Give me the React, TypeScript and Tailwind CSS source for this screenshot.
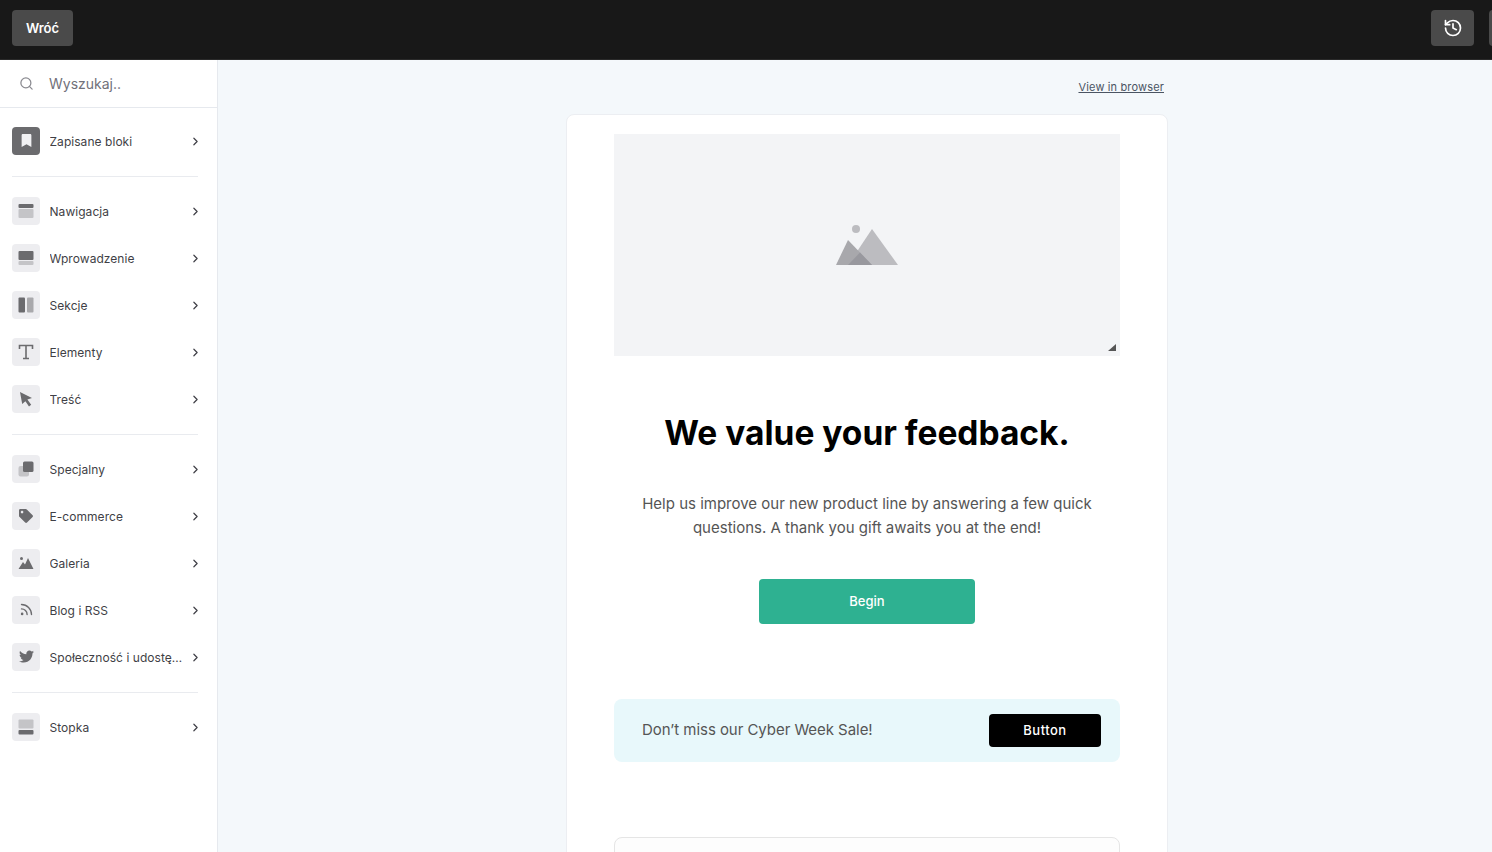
import { ChevronRight, History, Rss, Search } from "lucide-react";
import type { ReactNode } from "react";
import { FaBookmark, FaTag, FaTwitter } from "react-icons/fa";

const dark = "#6b6b6e";
const light = "#c4c4c7";

function Glyph({ children }: { children: ReactNode }) {
  return (
    <svg width="16" height="16" viewBox="0 0 16 16" fill="none">
      {children}
    </svg>
  );
}

const navIcon = (
  <Glyph>
    <rect x="0.5" y="1" width="15" height="4" rx="1" fill={dark} />
    <rect x="0.5" y="6" width="15" height="9" rx="1" fill={light} />
  </Glyph>
);
const heroIcon = (
  <Glyph>
    <rect x="0.5" y="1" width="15" height="9" rx="1" fill={dark} />
    <rect x="0.5" y="11" width="15" height="4" rx="1" fill={light} />
  </Glyph>
);
const sectionIcon = (
  <Glyph>
    <rect x="0.5" y="0.5" width="6.5" height="15" rx="1" fill={dark} />
    <rect x="9" y="0.5" width="6.5" height="15" rx="1" fill="#a9a9ac" />
  </Glyph>
);
const elementIcon = (
  <Glyph>
    <path d="M1.5 5V1.5h13V5M8 1.5v13M5 14.5h6" stroke={dark} strokeWidth="1.6" />
  </Glyph>
);
const pointerIcon = (
  <Glyph>
    <path d="M2 1l12 6-4.6 1.6 3.8 5.2-2.2 1.6-3.6-5.2L4.2 13z" fill={dark} />
  </Glyph>
);
const specialIcon = (
  <Glyph>
    <rect x="0.5" y="5" width="10.5" height="10.5" rx="2" fill={light} />
    <rect x="5" y="0.5" width="10.5" height="10.5" rx="1.5" fill={dark} />
  </Glyph>
);
const galleryIcon = (
  <Glyph>
    <circle cx="3.5" cy="3.5" r="1.5" fill={dark} />
    <path d="M0.5 14 5 7l2 2.5L10 3l5.5 11z" fill={dark} />
  </Glyph>
);
const footerIcon = (
  <Glyph>
    <rect x="0.5" y="0.5" width="15" height="9" rx="1" fill={light} />
    <rect x="0.5" y="11" width="15" height="4.5" rx="1" fill={dark} />
  </Glyph>
);

const groups: { label: string; icon: ReactNode }[][] = [
  [{ label: "Zapisane bloki", icon: <FaBookmark size={13} color="#f1f1f3" /> }],
  [
    { label: "Nawigacja", icon: navIcon },
    { label: "Wprowadzenie", icon: heroIcon },
    { label: "Sekcje", icon: sectionIcon },
    { label: "Elementy", icon: elementIcon },
    { label: "Treść", icon: pointerIcon },
  ],
  [
    { label: "Specjalny", icon: specialIcon },
    { label: "E-commerce", icon: <FaTag size={14} color={dark} /> },
    { label: "Galeria", icon: galleryIcon },
    { label: "Blog i RSS", icon: <Rss size={15} color={dark} strokeWidth={2.2} /> },
    { label: "Społeczność i udostępnianie", icon: <FaTwitter size={15} color={dark} /> },
  ],
  [{ label: "Stopka", icon: footerIcon }],
];

function NavRow({ label, icon, saved }: { label: string; icon: ReactNode; saved: boolean }) {
  return (
    <div className="flex h-[47px] items-center pl-3 pr-[15px]">
      <div
        className={`flex h-7 w-7 shrink-0 items-center justify-center rounded ${
          saved ? "bg-[#6b6b6e]" : "bg-[#ededf0]"
        }`}
      >
        {icon}
      </div>
      <span className="ml-[9.5px] min-w-0 flex-1 truncate pt-[2px] text-xs tracking-[0.05px] text-[#3f3f46]">
        {label}
      </span>
      <ChevronRight size={13} strokeWidth={2.2} className="mt-[2px] ml-[3px] shrink-0 text-[#3f3f46]" />
    </div>
  );
}

function Sidebar() {
  return (
    <aside className="w-[218px] shrink-0 border-r border-[#e6e9ee] bg-white">
      <div className="flex h-12 items-center border-b border-[#e6e9ee] pl-[19px]">
        <Search size={15} className="text-[#8a8a90]" />
        <span className="ml-[15px] text-sm text-[#71717a]">Wyszukaj..</span>
      </div>
      <div className="pt-[9px]">
        {groups.map((group, i) => (
          <div key={i}>
            {i > 0 && <div className="mx-3 mt-[12px] mb-[10px] h-px w-[186px] bg-[#e9ebef]" />}
            {group.map((item) => (
              <NavRow key={item.label} label={item.label} icon={item.icon} saved={i === 0} />
            ))}
          </div>
        ))}
      </div>
    </aside>
  );
}

export default function App() {
  return (
    <div className="flex h-screen flex-col overflow-hidden bg-[#f4f8fb] font-['Inter',sans-serif]">
      {/* Top bar */}
      <header className="flex h-[60px] shrink-0 items-start border-b border-[#2a2a2a] bg-[#181818] pt-[10px] pl-3">
        <button className="h-9 w-[61px] rounded bg-[#4a4a4a] pt-px text-[13px] font-semibold text-white">Wróć</button>
        <div className="ml-auto flex gap-[15px]">
          <button className="flex h-9 w-[43px] items-center justify-center rounded bg-[#4a4a4a]">
            <History size={20} strokeWidth={2} className="text-white" />
          </button>
          <div className="mr-[-40px] h-9 w-[43px] rounded bg-[#4a4a4a]" />
        </div>
      </header>

      <div className="flex min-h-0 flex-1">
        <Sidebar />

        {/* Email preview */}
        <main className="min-w-0 flex-1 overflow-hidden">
          <div className="ml-[348px] w-[602px] pt-[20px]">
            <div className="flex justify-end pr-[4px]">
              <a className="text-[11px] leading-[15px] tracking-[0.15px] text-[#4b5563] underline">View in browser</a>
            </div>
            <div className="mt-[19px] rounded-t-lg border border-[#eceef2] bg-white px-[47px] pt-[19px] pb-10">
              <div className="relative flex h-[222px] items-center justify-center bg-[#f3f4f6]">
                <svg width="62" height="42" viewBox="0 0 62 42" className="mt-[-1px]">
                  <circle cx="20" cy="5" r="4" fill="#bcbcc0" />
                  <path d="M36 5 62 41H12z" fill="#bcbcc0" />
                  <path d="M12 16 36 41H0z" fill="#a8a8ac" />
                  <path d="M24 28.5 36 41H12z" fill="#98989e" />
                </svg>
                <svg width="8" height="8" viewBox="0 0 8 8" className="absolute right-[4px] bottom-[4px]">
                  <path d="M8 0v7H0z" fill="#555" />
                </svg>
              </div>

              <h1 className="mt-[54px] text-center text-[33.5px] leading-[46px] font-bold text-black">
                We value your feedback.
              </h1>
              <p className="mx-auto mt-[36px] w-[470px] text-center text-[15px] leading-6 text-[#555]">
                Help us improve our new product line by answering a few quick questions. A thank you gift awaits you at
                the end!
              </p>
              <div className="mt-[39px] flex justify-center">
                <button className="h-[45px] w-[216px] rounded bg-[#2eb191] text-[13px] font-medium text-white">Begin</button>
              </div>

              <div className="mt-[75px] flex h-[63px] items-center justify-between rounded-lg bg-[#e8f8fb] pr-[19px] pl-[28px]">
                <span className="text-[15px] tracking-[-0.05px] text-[#555]">Don’t miss our Cyber Week Sale!</span>
                <button className="h-[33px] w-28 rounded bg-black text-[13px] font-medium tracking-[0.5px] text-white">
                  Button
                </button>
              </div>

              <div className="mt-[75px] h-40 rounded-lg border border-[#e5e5e5] bg-[#fdfdfd]" />
            </div>
          </div>
        </main>
      </div>
    </div>
  );
}
